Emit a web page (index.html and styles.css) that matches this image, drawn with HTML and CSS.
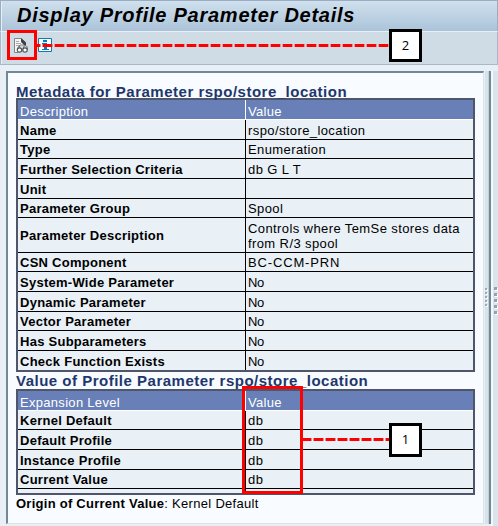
FILE: index.html
```html
<!DOCTYPE html>
<html lang="en">
<head>
<meta charset="utf-8">
<title>Display Profile Parameter Details</title>
<link rel="stylesheet" href="styles.css">
</head>
<body>
<div class="window">
  <header class="titlebar"><h1>Display Profile Parameter Details</h1></header>
  <div class="toolbar">
    <svg class="icon display" width="15" height="16" viewBox="0 0 15 16">
      <path d="M.5 14.500V.5H7l4 3.500V7H6l-2 7.500z" fill="#f4f5f5" stroke="#858585"/>
      <path d="M7 0l5 4.500V7h-2L7 4z" fill="#414141"/>
      <path d="M2 3.500h3M2 5.500h5M2 7.500h3" stroke="#aaa"/>
      <path d="M3.500 12c0-2 1-4 2.500-4.500M9 12c0-2 .8-4 2-4.500 1.800 0 2.500 2 2.500 4" fill="none" stroke="#666"/>
      <circle cx="5.500" cy="12" r="2.200" fill="#fff" stroke="#555" stroke-width="1.200"/>
      <circle cx="11" cy="12" r="2.200" fill="#fff" stroke="#555" stroke-width="1.200"/>
    </svg>
    <svg class="icon info" width="14" height="14" viewBox="0 0 14 14">
      <path d="M.5.5h13v13H.500z" fill="#fff" stroke="#087cba"/>
      <path d="M5 2h4v2H5zM4 5h5v6h2v1H4v-1h2V6H4z" fill="#087cba"/>
    </svg>
  </div>
  <main class="content">
    <section class="panel">
      <h2>Metadata for Parameter rspo/store_location</h2>
      <div class="table">
        <div class="row head"><div>Description</div><div>Value</div></div>
        <div class="row"><div>Name</div><div>rspo/store_location</div></div>
        <div class="row short"><div>Type</div><div>Enumeration</div></div>
        <div class="row"><div>Further Selection Criteria</div><div>db G L T</div></div>
        <div class="row"><div>Unit</div><div></div></div>
        <div class="row short"><div>Parameter Group</div><div>Spool</div></div>
        <div class="row tall"><div>Parameter Description</div><div>Controls where TemSe stores data<br>from R/3 spool</div></div>
        <div class="row short"><div>CSN Component</div><div class="code">BC-CCM-PRN</div></div>
        <div class="row"><div>System-Wide Parameter</div><div class="tight">No</div></div>
        <div class="row"><div>Dynamic Parameter</div><div class="tight">No</div></div>
        <div class="row short"><div>Vector Parameter</div><div class="tight">No</div></div>
        <div class="row"><div>Has Subparameters</div><div class="tight">No</div></div>
        <div class="row last"><div>Check Function Exists</div><div class="tight">No</div></div>
      </div>
      <h2 class="second">Value of Profile Parameter rspo/store_location</h2>
      <div class="table">
        <div class="row head"><div>Expansion Level</div><div>Value</div></div>
        <div class="row short"><div>Kernel Default</div><div>db</div></div>
        <div class="row"><div>Default Profile</div><div>db</div></div>
        <div class="row"><div>Instance Profile</div><div>db</div></div>
        <div class="row short"><div>Current Value</div><div>db</div></div>
        <div class="row empty"><div></div><div></div></div>
      </div>
      <p class="origin"><b>Origin of Current Value</b>: Kernel Default</p>
    </section>
    <div class="splitter"><i></i><i></i><i></i><i></i><i></i></div>
    <div class="edge"><i></i><i></i><i></i><i></i><i></i></div>
  </main>
  <div class="dash dash-icon"></div>
  <div class="mark mark-icon"></div>
  <div class="callout callout-icon">2</div>
  <div class="mark mark-values"></div>
  <div class="dash dash-values"></div>
  <div class="callout callout-values">1</div>
</div>
</body>
</html>
```
FILE: styles.css
```css
* { box-sizing: border-box; }
body { margin: 0; background: #e8f0f6; font: 13px/15px "Liberation Sans", Arial, sans-serif; color: #000; }
h1, h2, p { margin: 0; }
.window { position: relative; width: 498px; height: 526px; overflow: hidden; display: flex; flex-direction: column; }
.titlebar { height: 31px; border: 1px solid #9cadc3; border-bottom: 0; padding: 2px 0 0 16px; background: linear-gradient(#cfe0ed, #abc3d9); box-shadow: inset 1px 0 #e6eff6; }
h1 { font: italic bold 20px/24px "Liberation Sans", Arial, sans-serif; letter-spacing: 0.75px; white-space: nowrap; }
.toolbar { height: 34px; border: 1px solid #a8b8cc; border-top-color: #e8f0f7; background: #cfdce6; box-shadow: inset 1px 0 #e6eff6; display: flex; gap: 9px; padding: 6px 0 0 13px; }
.icon { flex: none; }
.content { flex: 1; display: flex; padding: 6px 0 0 6px; }
.panel { width: 478px; height: 453px; border: 2px solid #728896; border-right: 1px solid #dbe3e9; border-bottom: 1px solid #dbe3e9; background: #f8fbff; padding: 10px 0 0 8px; }
h2 { height: 15px; font: bold 15px/17px "Liberation Sans", Arial, sans-serif; letter-spacing: 0.5px; color: #21376b; white-space: nowrap; }
h2.second { height: 17px; }
.table { width: 459px; border: 2px solid #4f566b; background: #e9f0f6; }
.row { height: 20px; display: grid; grid-template-columns: 227px 228px; border-bottom: 1px solid #000; white-space: nowrap; }
.row > div { display: flex; align-items: center; padding: 1px 0 0 2px; font-weight: bold; letter-spacing: 0.26px; }
.row > div + div { border-left: 1px solid #000; font-weight: normal; letter-spacing: 0.4px; }
.row > div + div.tight { letter-spacing: -0.4px; }
.row > div + div.code { letter-spacing: 0.85px; }
.row.short { height: 19px; }
.row.tall { height: 35px; }
.row.last { height: 19px; border-bottom: 0; }
.row.empty { height: 4px; border-bottom: 0; }
.row.head { background: #6880b7; color: #fff; border-color: #fff; padding-top: 2px; }
.row.head > div { font-weight: normal; margin-top: -2px; padding-top: 3px; letter-spacing: 0.3px; }
.row.head > div + div { border-color: #fff; }
.origin { line-height: 17px; letter-spacing: 0.3px; }
.origin b { letter-spacing: 0.26px; }
.splitter { width: 6px; height: 453px; margin-left: 1px; background: #d7e3ea; border-right: 2px solid #748894; padding-top: 217px; box-shadow: inset -1px 0 #c2d0d9; }
.edge { flex: 1; height: 455px; background: #d9e4ec; border-left: 2px solid #f4f8fc; padding: 216px 0 0 1px; }
.splitter i { display: block; width: 2px; height: 2px; margin-bottom: 2px; background: #9aa8b8; box-shadow: 1px 1px #fff; }
.edge i { display: block; width: 3px; height: 3px; margin-bottom: 3px; background: #94a1b3; box-shadow: 1px 1px #fff; }
.mark { position: absolute; border: 3px solid #f00; }
.mark-icon { left: 7px; top: 30px; width: 30px; height: 30px; }
.mark-values { left: 242px; top: 386px; width: 61px; height: 108px; }
.dash { position: absolute; height: 3px; background: linear-gradient(90deg, #f00 0 9px, #e88d94 9px 10px, transparent 10px 11px, #e88d94 11px 12px) 0 0 / 12px 3px repeat-x; }
.dash-icon { left: 35px; top: 44px; width: 354px; background-position-x: -4px; }
.dash-values { left: 302px; top: 438px; width: 88px; }
.callout { position: absolute; left: 389px; width: 33px; border: 3px solid #000; background: #fff; text-align: center; font: 13px/27px "Open Sans", sans-serif; }
.callout-icon { top: 29px; height: 33px; }
.callout-values { top: 423px; height: 34px; }
```
